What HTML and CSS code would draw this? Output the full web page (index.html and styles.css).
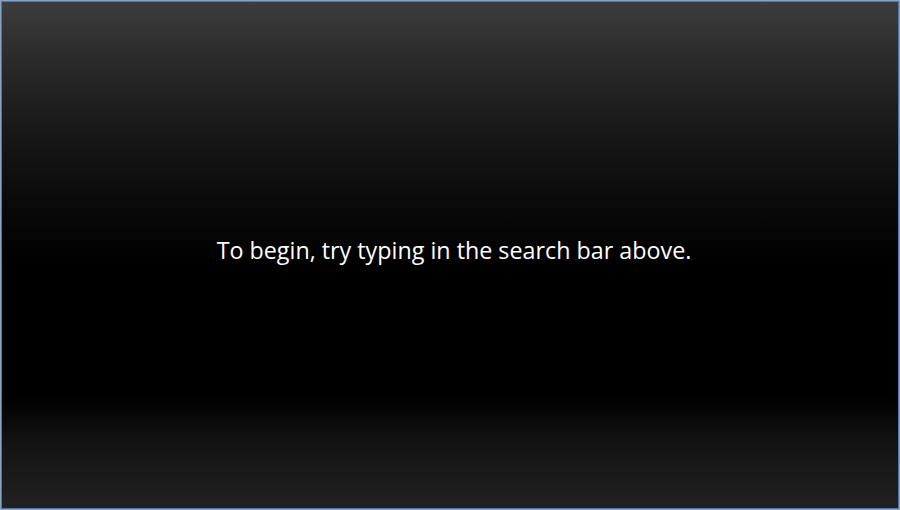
FILE: index.html
```html
<!DOCTYPE html>
<html>
<head>
<meta charset="utf-8">
<link rel="stylesheet" href="styles.css">
</head>
<body>
<div class="panel">
  <p class="hint">To begin, try typing in the search bar above.</p>
</div>
</body>
</html>
```

FILE: styles.css
```css
html, body {
  margin: 0;
  padding: 0;
  width: 900px;
  height: 510px;
  overflow: hidden;
  background: #000;
}
.panel {
  box-sizing: border-box;
  width: 900px;
  height: 510px;
  border: 1px solid #86a3c6;
  box-shadow: inset 0 0 0 1px #4f78a6;
  background: linear-gradient(to bottom,
    #3d3d3d 0px,
    #2a2a2a 60px,
    #181818 130px,
    #0a0a0a 200px,
    #000000 265px,
    #000000 395px,
    #141414 445px,
    #222222 510px);
  display: flex;
  align-items: center;
  justify-content: center;
}
.hint {
  margin: 0 0 10px 8px;
  color: #ffffff;
  font-family: "Open Sans", "Noto Sans", sans-serif;
  font-size: 23.3px;
  letter-spacing: 0;
}
```
